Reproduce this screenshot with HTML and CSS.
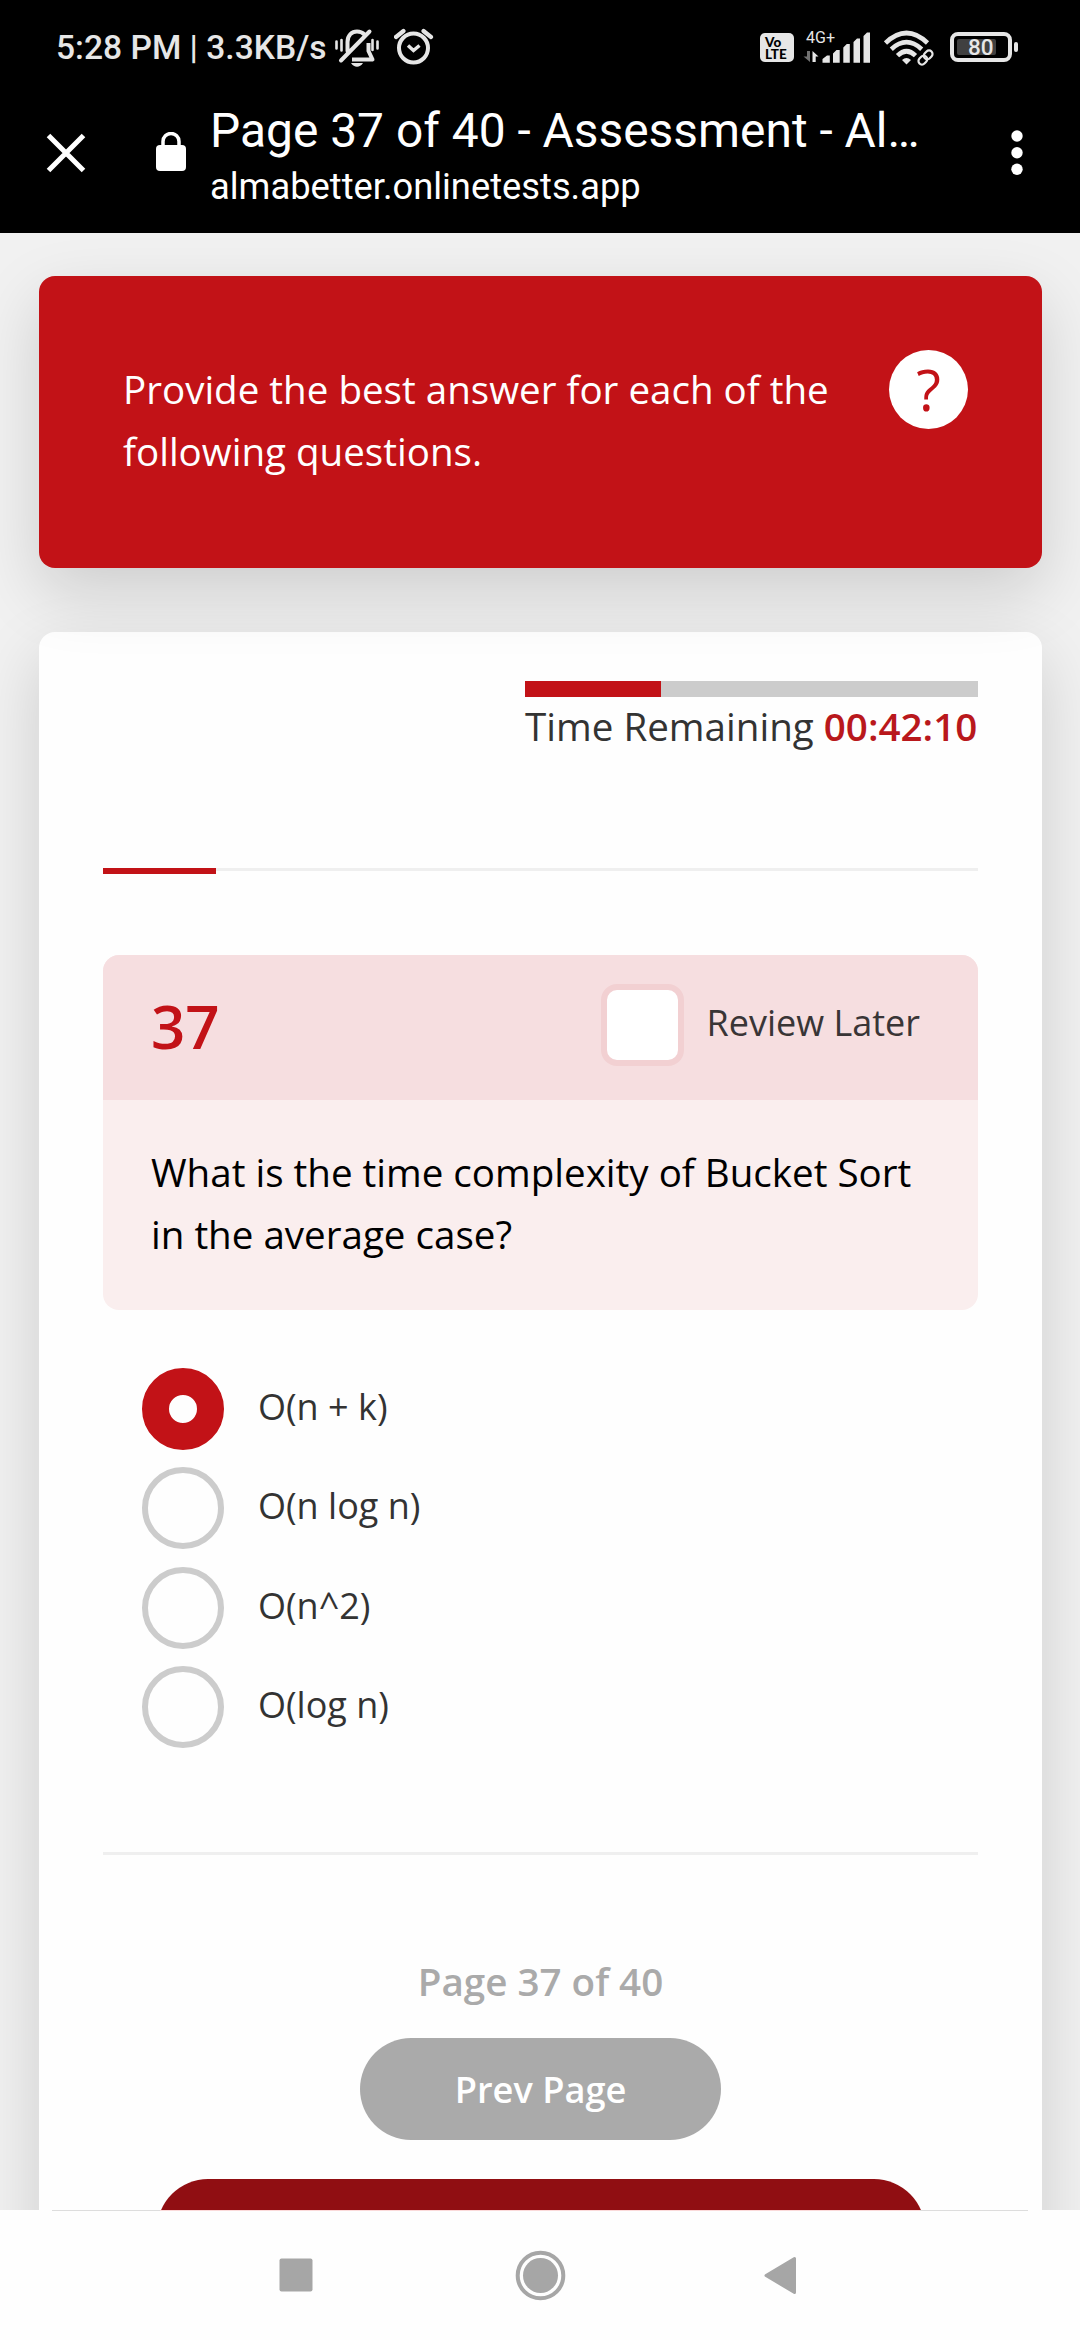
FILE: index.html
```html
<!DOCTYPE html>
<html lang="en">
<head>
<meta charset="utf-8">
<title>Page 37 of 40 - Assessment</title>
<link rel="stylesheet" href="styles.css">
</head>
<body>
<div class="screen">
  <header class="browser">
    <div class="status">
      <span class="clock">5:28 PM | 3.3KB/s</span>
      <svg class="bell" width="46" height="40" viewBox="334 28 46 40" fill="none" stroke="#e6e6e6">
        <path d="M347.500 51V42c0-7 4.500-10.500 9.500-10.500 3 0 5.500 1 7.500 3M341 60.500l28.500-29" stroke-width="4" stroke-linecap="round"/>
        <path d="M368.500 43v8l4 8.500H352" stroke-width="4" stroke-linejoin="round"/>
        <path d="M351 63h12q-2.500 3.800-6 3.800t-6-3.800z" fill="#e6e6e6" stroke="none"/>
        <path d="M336.500 41.500v7M341.500 40v10.500M372.500 40v10M377.500 41.500v7" stroke-width="2.600" stroke-linecap="round"/>
      </svg>
      <svg class="alarm" width="40" height="38" viewBox="394 28 40 38" fill="none" stroke="#e6e6e6" stroke-width="4">
        <circle cx="413.500" cy="48" r="14.500"/>
        <path d="M396 37l7.500-6M431 37l-7.500-6" stroke-width="4.200" stroke-linecap="round"/>
        <path d="M408 45.500l5.500 5 6-5" stroke-width="3.500"/>
      </svg>
      <span class="volte"><b>Vo</b><b>LTE</b></span>
      <div class="signal">
        <span class="net">4G+</span>
        <svg width="68" height="32" viewBox="803 32 68 32" fill="#e6e6e6">
          <path d="M807 51h3v11l-6.500-5.500h3.500z" fill="#707070"/>
          <path d="M812.500 62V51l6 5.500h-2.800V62z"/>
          <path d="M822.500 62.700v-3.700l4.500-3.500h2.800v7.200zM833 62.700V53.500l3.500-3.500h3.200v12.700zM843.300 62.700V47.500l3.500-3.500h3v18.700zM853.500 62.700V42l3.500-3.500h3v24.200zM863.500 62.700V36l3.500-3.500h3v30.200z"/>
        </svg>
      </div>
      <svg class="wifi" width="50" height="36" viewBox="884 30 50 36" fill="none" stroke="#e6e6e6">
        <path d="M885.500 43q21-20 42 0M891.300 49.200q15.200-14 30.400 0M897.500 55.700q9-9 18 0" stroke-width="4.600"/>
        <path d="M902 60q4.500-4 9 0l-4.500 4.500z" fill="#e6e6e6" stroke="none"/>
        <g stroke-width="2.200" transform="rotate(-45 925.500 57.500)"><rect x="917" y="54" width="9.500" height="7" rx="3.500"/><rect x="924.500" y="54" width="9.500" height="7" rx="3.500"/></g>
      </svg>
      <div class="battery"><span class="cell"><span class="charge">80</span></span><span class="tip"></span></div>
    </div>
    <div class="bar">
      <svg class="close" width="40" height="40" viewBox="0 0 40 40" stroke="#fff" stroke-width="5"><path d="M2.500 2.500l35 35M37.500 2.500l-35 35"/></svg>
      <svg class="lock" width="30" height="40" viewBox="0 0 30 40"><rect y="13" width="30" height="26" rx="4" fill="#fff"/><path d="M7 15V9.500a8 8 0 0 1 16 0V15" fill="none" stroke="#fff" stroke-width="3.500"/></svg>
      <div class="address">
        <div class="title">Page 37 of 40 - Assessment - Al…</div>
        <div class="url">almabetter.onlinetests.app</div>
      </div>
      <svg class="more" width="12" height="46" viewBox="0 0 12 46" fill="#fff"><circle cx="6" cy="6" r="5.700"/><circle cx="6" cy="22.700" r="5.700"/><circle cx="6" cy="39.300" r="5.700"/></svg>
    </div>
  </header>
  <main class="page">
    <section class="intro">
      <p class="intro-text">Provide the best answer for each of the following questions.</p>
      <span class="help">?</span>
    </section>
    <section class="quiz">
      <div class="timer">
        <div class="track"><div class="elapsed"></div></div>
        <div class="remaining">Time Remaining <b>00:42:10</b></div>
      </div>
      <div class="progress"><div class="done"></div></div>
      <div class="question">
        <div class="question-head">
          <span class="number">37</span>
          <label class="review"><span class="box"></span>Review Later</label>
        </div>
        <p class="question-text">What is the time complexity of Bucket Sort in the average case?</p>
      </div>
      <div class="options">
        <label class="option"><span class="radio checked"></span>O(n + k)</label>
        <label class="option"><span class="radio"></span>O(n log n)</label>
        <label class="option"><span class="radio"></span>O(n^2)</label>
        <label class="option"><span class="radio"></span>O(log n)</label>
      </div>
      <div class="pager">
        <div class="count">Page 37 of 40</div>
        <div class="prev">Prev Page</div>
        <div class="next"></div>
      </div>
    </section>
  </main>
  <nav class="system">
    <div class="edge"></div>
    <div class="keys">
      <svg width="1080" height="128" viewBox="0 2211 1080 128" fill="#a6a6a6">
        <rect x="279.500" y="2258.500" width="33" height="33" rx="2"/>
        <circle cx="540.500" cy="2275.500" r="17.500"/>
        <circle cx="540.500" cy="2275.500" r="22.800" fill="none" stroke="#a6a6a6" stroke-width="4"/>
        <path d="M766 2275.500l28.500-17v34z" stroke="#a6a6a6" stroke-width="3" stroke-linejoin="round"/>
      </svg>
    </div>
  </nav>
</div>
</body>
</html>
```
FILE: styles.css
```css
* { box-sizing: border-box; }
body { margin: 0; background: #fefefe; }
p { margin: 0; }
.screen { width: 1080px; height: 2340px; overflow: hidden; display: flex; flex-direction: column; font-family: "Open Sans", sans-serif; color: #333; }

.browser { height: 233px; flex: none; background: #000; color: #fff; font-family: Roboto, sans-serif; }
.status { height: 100px; padding: 28px 0 0 56px; display: flex; align-items: flex-start; color: #e6e6e6; }
.clock { width: 278px; font-size: 33.6px; line-height: 40px; font-weight: 500; white-space: nowrap; }
.bell { flex: none; }
.alarm { flex: none; margin-left: 14px; }
.volte { width: 34px; height: 29px; margin: 5px 0 0 326px; padding: 3px 0 0 5px; border-radius: 5px; background: #e6e6e6; color: #000; display: flex; flex-direction: column; font: 900 13.5px/12px Lato, sans-serif; }
.signal { width: 68px; height: 36px; margin-left: 9px; display: grid; }
.signal > * { grid-area: 1 / 1; }
.signal svg { margin-top: 4px; }
.net { font-size: 16px; line-height: 18px; padding: 1px 0 0 3px; }
.wifi { margin: 2px 0 0 13px; flex: none; }
.battery { display: flex; align-items: center; margin: 4px 0 0 16px; gap: 2px; }
.cell { width: 62px; height: 30px; border: 4px solid #e6e6e6; border-radius: 8px; padding: 3px; }
.charge { display: block; width: 39px; height: 16px; background: #404040; border-radius: 2px; font-size: 22.5px; line-height: 17px; font-weight: 500; padding-left: 11px; }
.tip { width: 4px; height: 10px; background: #e6e6e6; border-radius: 2px; }
.bar { display: flex; align-items: flex-start; }
.close { margin: 33px 0 0 46px; flex: none; }
.lock { margin: 32px 0 0 70px; flex: none; }
.address { width: 790px; padding: 3px 0 0 24px; white-space: nowrap; }
.title { font-size: 47.9px; line-height: 56px; }
.url { margin-top: 6px; font-size: 36.3px; line-height: 44px; }
.more { margin: 30px 0 0 35px; flex: none; }

.page { height: 1977px; flex: none; overflow: hidden; padding: 43px 38px 0 39px; background: #f1f1f1; }
.intro { height: 292px; border-radius: 16px; background: #c21217; color: #fff; padding: 82px 74px 0 84px; display: flex; justify-content: space-between; align-items: flex-start; position: relative; z-index: 1; box-shadow: 0 24px 66px rgba(0,0,0,.15); }
.intro-text { width: 730px; font-size: 38.55px; line-height: 62px; }
.help { width: 79px; height: 79px; margin-top: -8px; border-radius: 50%; background: #fff; color: #c21217; font-size: 57px; line-height: 78px; text-align: center; }
.quiz { height: 2000px; margin-top: 64px; padding: 49px 64px 0; border-radius: 16px; background: #fefefe; box-shadow: 0 24px 66px rgba(0,0,0,.15); }
.timer { width: 453px; margin-left: auto; }
.track { height: 16px; background: #ccc; }
.elapsed { width: 30%; height: 16px; background: #c21217; }
.remaining { margin-top: -2px; font-size: 38.6px; line-height: 62px; white-space: nowrap; }
.remaining b { font-weight: 600; color: #b9181c; }
.progress { height: 3px; margin-top: 111px; background: #efefef; }
.done { width: 113px; height: 6px; background: #c21217; }
.question { height: 355px; margin-top: 84px; border-radius: 16px; overflow: hidden; background: #faeeee; }
.question-head { height: 145px; padding: 0 58px 0 48px; background: #f6dee0; display: flex; justify-content: space-between; align-items: flex-start; }
.number { padding-top: 22px; font-size: 60px; line-height: 98px; font-weight: 600; color: #c21217; }
.review { display: flex; gap: 22px; padding-top: 29px; font-size: 36px; line-height: 78px; color: #393536; }
.box { width: 83px; height: 82px; border: 6px solid #f2d0d2; border-radius: 16px; background: #fff; }
.question-text { padding: 41px 48px 0; font-size: 38.55px; line-height: 62px; color: #000; }
.options { display: flex; flex-direction: column; gap: 17.3px; padding: 58px 0 104px 39px; }
.option { display: flex; gap: 34px; height: 82px; font-size: 36px; line-height: 78px; }
.radio { width: 82px; height: 82px; border: 6px solid #ccc; border-radius: 50%; }
.radio.checked { border: 27px solid #c21217; }
.pager { border-top: 3px solid #efefef; display: flex; flex-direction: column; align-items: center; }
.count { margin-top: 95px; font-size: 38.6px; line-height: 62px; font-weight: 600; color: #aaa; }
.prev { width: 361px; height: 102px; margin-top: 26px; border-radius: 51px; background: #aaa; color: #fff; font-size: 36.2px; line-height: 102px; font-weight: 600; text-align: center; }
.next { width: 768px; height: 102px; margin-top: 39px; border-radius: 51px; background: #900e12; }

.system { flex: none; height: 130px; background: #fefefe; }
.edge { height: 1px; margin: 0 52px; background: linear-gradient(90deg, #ddd 108px, #fbdada 108px 868px, #ddd 868px); }
.keys svg { display: block; }
```
